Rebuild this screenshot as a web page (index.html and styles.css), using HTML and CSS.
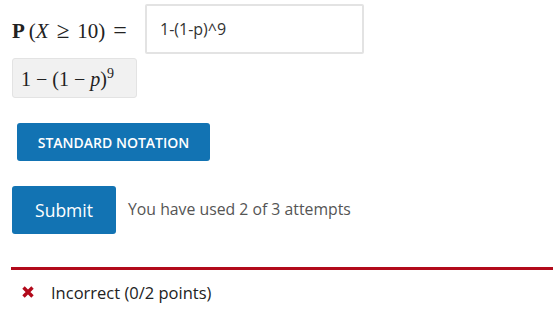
FILE: index.html
```html
<!DOCTYPE html>
<html>
<head>
<meta charset="utf-8">
<link rel="stylesheet" href="styles.css">
</head>
<body>
<div class="problem">
  <div class="answer-row">
    <span class="math label"><b>P</b><span class="thin"></span>(<i>X</i><span class="rel ge">&ge;</span>10)<span class="rel eq">=</span></span>
    <div class="input-box">1-(1-p)^9</div>
  </div>
  <div class="preview"><span class="math">1<span class="op">&minus;</span>(1<span class="op">&minus;</span><i>p</i>)<sup>9</sup></span></div>
  <button class="btn notation">STANDARD NOTATION</button>
  <div class="submit-row">
    <button class="btn submit">Submit</button>
    <span class="attempts">You have used 2 of 3 attempts</span>
  </div>
  <div class="feedback">
    <svg class="xicon" width="12" height="12" viewBox="0 0 12 12"><path d="M1.5 1.5 L10.5 10.5 M10.5 1.5 L1.5 10.5" stroke="#b20a1b" stroke-width="3.4" stroke-linecap="butt"/></svg>
    <span class="result">Incorrect (0/2 points)</span>
  </div>
</div>
</body>
</html>
```
FILE: styles.css
```css
html, body {
  margin: 0;
  padding: 0;
  background: #fff;
}
body {
  font-family: "Open Sans", sans-serif;
  color: #333;
}
.problem {
  padding: 4px 0 0 12px;
}
.answer-row {
  display: flex;
  align-items: center;
}
.math {
  font-family: "Liberation Serif", "Times New Roman", serif;
  color: #222;
}
.label {
  box-sizing: border-box;
  width: 133px;
  font-size: 21px;
  white-space: nowrap;
  margin-top: 2px;
}
.label b { font-weight: bold; }
.thin {
  display: inline-block;
  width: 4px;
}
.rel {
  margin: 0 8px;
}
.ge {
  font-size: 23px;
}
.eq {
  font-size: 24px;
  margin-right: 0;
}
.input-box {
  box-sizing: border-box;
  width: 219px;
  height: 50px;
  border: 2px solid #e3e3e3;
  border-radius: 2px;
  padding-left: 13px;
  display: flex;
  align-items: center;
  font-size: 16px;
  color: #333;
}
.preview {
  box-sizing: border-box;
  margin-top: 4px;
  width: 125px;
  height: 40px;
  background: #f1f1f1;
  border: 1px solid #e3e3e3;
  border-radius: 3px;
  padding-left: 8px;
  display: flex;
  align-items: center;
}
.preview .math {
  font-size: 20px;
  line-height: 1;
  margin-top: 2px;
  white-space: nowrap;
}
.op {
  margin: 0 5px;
}
.preview sup {
  font-size: 14px;
  vertical-align: 8px;
  line-height: 0;
}
.btn {
  display: flex;
  align-items: center;
  justify-content: center;
  border: none;
  border-radius: 3px;
  background: #1273b3;
  color: #fff;
  font-family: "Open Sans", sans-serif;
  padding: 0;
}
.notation {
  margin: 25px 0 0 5px;
  width: 193px;
  height: 38px;
  font-size: 14px;
  font-weight: 600;
}
.submit-row {
  margin-top: 25px;
  display: flex;
  align-items: center;
  gap: 12px;
}
.submit {
  width: 104px;
  height: 48px;
  font-size: 17.5px;
}
.attempts {
  font-size: 15.8px;
  color: #555;
  margin-bottom: 2px;
}
.feedback {
  margin-top: 33px;
  margin-left: -1px;
  border-top: 3px solid #b20a1b;
  display: flex;
  align-items: center;
  height: 45px;
  padding-left: 11px;
  gap: 17px;
}
.xicon {
  flex: none;
  margin-top: -1px;
}
.result {
  font-size: 16.5px;
  color: #222;
}
```
